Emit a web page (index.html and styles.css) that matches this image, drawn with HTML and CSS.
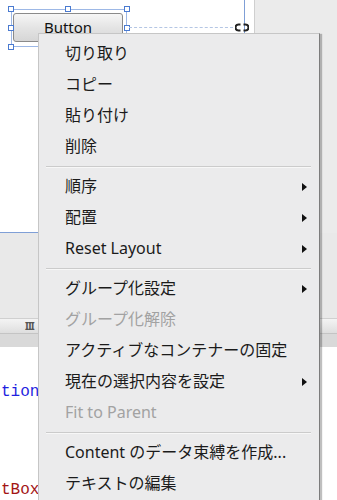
FILE: index.html
```html
<!DOCTYPE html>
<html lang="ja">
<head>
    <meta charset="utf-8">
    <title>デザイナー</title>
    <link rel="stylesheet" href="styles.css">
</head>
<body>
    <div class="designer">
        <div class="artboard">
            <!-- 選択中のボタン -->
            <div class="selection">
                <span class="handle h-tl"></span>
                <span class="handle h-tc"></span>
                <span class="handle h-tr"></span>
                <span class="handle h-ml"></span>
                <span class="handle h-mr"></span>
                <span class="handle h-bl"></span>
                <div class="btn">Button</div>
            </div>
            <div class="guide"></div>
            <svg class="link" width="14" height="9" viewBox="0 0 14 9">
                <path d="M5.5 1.5 H3.5 A3 3 0 0 0 3.5 7.5 H5.5" fill="none" stroke="#222" stroke-width="2"/>
                <path d="M8.5 1.5 H10.5 A3 3 0 0 1 10.5 7.5 H8.5" fill="none" stroke="#222" stroke-width="2"/>
            </svg>
        </div>
        <div class="gutter"></div>
        <div class="side"></div>
    </div>
    <div class="props"></div>
    <div class="hscroll"><span class="grip">III</span></div>
    <div class="tabs"></div>
    <div class="code">
        <div class="line attr">tion</div>
        <div class="line"></div>
        <div class="line"></div>
        <div class="line"></div>
        <div class="line"></div>
        <div class="line tag">tBox</div>
    </div>

    <!-- コンテキストメニュー -->
    <ul class="menu">
        <li>切り取り</li>
        <li>コピー</li>
        <li>貼り付け</li>
        <li>削除</li>
        <li class="sep"></li>
        <li class="sub">順序</li>
        <li class="sub">配置</li>
        <li class="sub">Reset Layout</li>
        <li class="sep"></li>
        <li class="sub">グループ化設定</li>
        <li class="off">グループ化解除</li>
        <li>アクティブなコンテナーの固定</li>
        <li class="sub">現在の選択内容を設定</li>
        <li class="off">Fit to Parent</li>
        <li class="sep"></li>
        <li>Content のデータ束縛を作成...</li>
        <li>テキストの編集</li>
    </ul>
</body>
</html>
```

FILE: styles.css
```css
/* 全体 */
body {
    margin: 0;
    width: 337px;
    height: 500px;
    overflow: hidden;
    position: relative;
    background-color: #fff;
    font-family: "Noto Sans", "Noto Sans CJK JP", sans-serif;
}

/* デザイン領域 */
.designer {
    display: flex;
    height: 233px;
}

.artboard {
    position: relative;
    width: 244px;
    background-color: #fff;
    border-right: 1px solid #7f9fd6;
    border-bottom: 1px solid #7f9fd6;
}

.gutter {
    width: 9px;
    background-color: #fff;
}

.side {
    flex: 1;
    background-color: #ebebeb;
    border-left: 1px solid #cfcfcf;
}

/* 選択枠 */
.selection {
    position: absolute;
    left: 11px;
    top: 9px;
    width: 114px;
    height: 36px;
    border: 1px solid #9db8e6;
}

.handle {
    position: absolute;
    width: 4px;
    height: 4px;
    background-color: #fff;
    border: 1px solid #4a7ad0;
}

.h-tl { left: -4px; top: -4px; }
.h-tc { left: 53px; top: -4px; }
.h-tr { right: -4px; top: -4px; }
.h-ml { left: -4px; top: 15px; }
.h-mr { right: -4px; top: 15px; }
.h-bl { left: -4px; bottom: -4px; }

.btn {
    margin: 3px 3px 0 1px;
    height: 27px;
    line-height: 26px;
    text-align: center;
    font-size: 15px;
    color: #111;
    border: 1px solid #8a8a8a;
    border-radius: 3px;
    background: linear-gradient(#f6f6f6, #e4e4e4 50%, #d6d6d6);
}

.guide {
    position: absolute;
    left: 129px;
    top: 27px;
    width: 104px;
    border-top: 1px dashed #b4c6e4;
}

.link {
    position: absolute;
    left: 235px;
    top: 23px;
}

/* 下部パネル */
.props {
    height: 85px;
    background-color: #e9e9e9;
}

.hscroll {
    height: 14px;
    background: linear-gradient(#f4f4f4, #dedede);
    border-top: 1px solid #d0d0d0;
    position: relative;
}

.grip {
    position: absolute;
    left: 25px;
    top: 0;
    font-size: 10px;
    font-weight: bold;
    letter-spacing: -1px;
    color: #555;
}

.tabs {
    height: 13px;
    background-color: #d9d9d9;
    border-top: 1px solid #c4c4c4;
}

.code {
    font-family: "Liberation Mono", monospace;
    font-size: 16px;
    padding: 36px 0 0 1px;
}

.line {
    height: 19.6px;
    line-height: 19.6px;
    white-space: pre;
}

.attr {
    color: #1f1fe0;
}

.tag {
    color: #a31515;
}

/* コンテキストメニュー */
.menu {
    position: absolute;
    left: 38px;
    top: 33px;
    width: 280px;
    height: 480px;
    margin: 0;
    padding: 4px 0 0;
    list-style: none;
    background-color: #ebebec;
    border: 1px solid #c6c6c6;
    border-right: 1px solid #7c7c7c;
    box-shadow: 2px 1px 1px rgba(0, 0, 0, 0.25);
}

.menu li {
    position: relative;
    height: 31px;
    line-height: 31px;
    padding-left: 26px;
    font-size: 16px;
    color: #1b1b1b;
    white-space: nowrap;
}

.menu li.off {
    color: #a2a2a2;
}

.menu li.sub::after {
    content: "";
    position: absolute;
    left: 263px;
    top: 12px;
    border-left: 5px solid #111;
    border-top: 4px solid transparent;
    border-bottom: 4px solid transparent;
}

.menu li.sep {
    height: 1px;
    margin: 4px 8px 3px 7px;
    padding: 0;
    background-color: #cbcbcb;
    border-bottom: 1px solid #f7f7f7;
}
```
